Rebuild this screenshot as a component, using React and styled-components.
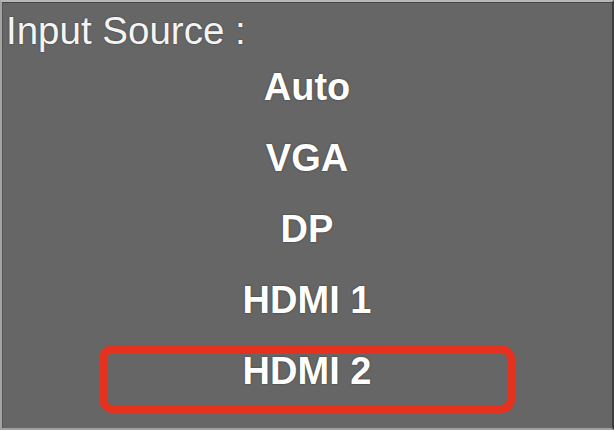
import React from 'react';
import styled, { createGlobalStyle } from 'styled-components';

const GlobalStyle = createGlobalStyle`
  html, body {
    margin: 0;
    padding: 0;
    background: #666666;
  }
  body {
    font-family: "Liberation Sans", Arial, sans-serif;
  }
`;

const Panel = styled.div`
  box-sizing: border-box;
  width: 614px;
  height: 430px;
  background: #666666;
  border-top: 2px solid #b8b8b8;
  border-left: 2px solid #a4a4a4;
  border-right: 2px solid #3e3e3e;
  border-bottom: 2px solid #a0a0a0;
  box-shadow: inset 0 1px 0 #454545, inset 1px 0 0 #555555;
  padding-top: 6px;
  overflow: hidden;
`;

const Title = styled.div`
  padding-left: 4px;
  font-size: 38.5px;
  line-height: 45px;
  color: #f4f4f4;
  text-shadow: 0 0 2px rgba(0, 0, 0, 0.45);
`;

const List = styled.div`
  display: flex;
  flex-direction: column;
`;

const Option = styled.div`
  position: relative;
  height: 71px;
  line-height: 69px;
  text-align: center;
  font-size: 38px;
  font-weight: bold;
  color: #ffffff;
  text-shadow: 0 0 2px rgba(0, 0, 0, 0.55);

  ${({ $selected }) => $selected && `
    &::after {
      content: '';
      position: absolute;
      box-sizing: border-box;
      top: 8px;
      left: 50%;
      width: 416px;
      height: 68px;
      transform: translateX(-50%);
      border: 8px solid #e5321f;
      border-radius: 14px;
    }
  `}
`;

const sources = ['Auto', 'VGA', 'DP', 'HDMI 1', 'HDMI 2'];

export default function App() {
  const selected = 'HDMI 2';
  return (
    <React.Fragment>
      <GlobalStyle />
      <Panel>
        <Title>Input Source :</Title>
        <List>
          {sources.map(src => (
            <Option key={src} $selected={src === selected}>{src}</Option>
          ))}
        </List>
      </Panel>
    </React.Fragment>
  );
}
